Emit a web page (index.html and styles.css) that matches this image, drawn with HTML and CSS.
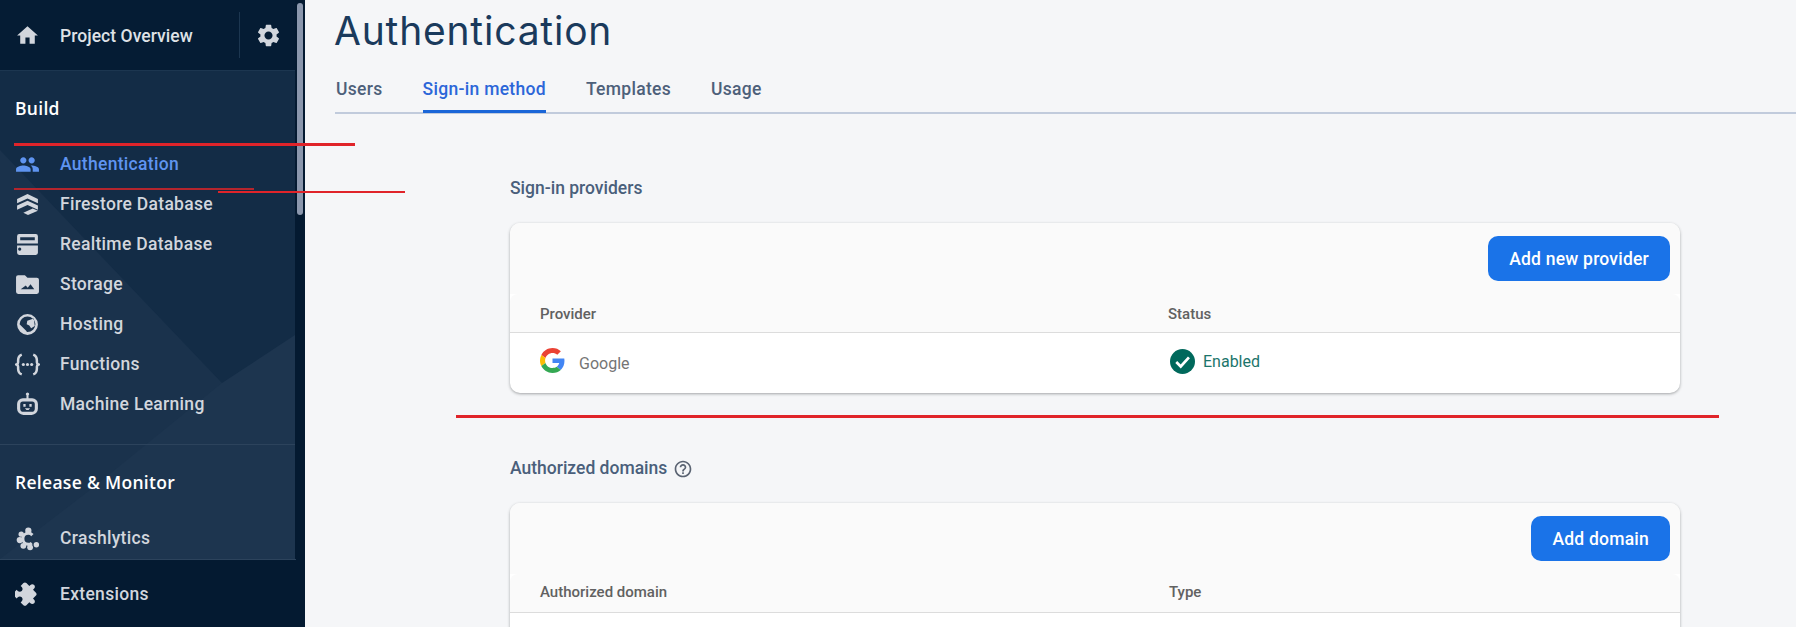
FILE: index.html
```html
<!DOCTYPE html>
<html>
  <head>
    <meta charset="UTF-8" />
    <title>Authentication</title>
    <link rel="stylesheet" href="styles.css">
  </head>
  <body>
    <div class="app">
      <aside class="sidebar">
        <div class="side-top">
          <div class="side-scroll">
            <svg class="side-decor" viewBox="0 0 295 559" preserveAspectRatio="none">
              <polygon points="0,150 260,423 295,470 295,559 0,559" fill="#1a324c" />
              <polygon points="295,335 222,383 170,425 90,490 0,559 295,559" fill="#1d354f" />
            </svg>
            <div class="project-bar">
              <svg class="icon" viewBox="0 0 24 24"><path d="M10 20v-6h4v6h5v-8h3L12 3 2 12h3v8z" /></svg>
              <span class="project-name">Project Overview</span>
              <span class="project-gear">
                <svg class="icon gear" viewBox="0 0 24 24"><path d="M19.14 12.94c.04-.3.06-.61.06-.94 0-.32-.02-.64-.07-.94l2.03-1.58c.18-.14.23-.41.12-.61l-1.92-3.32c-.12-.22-.37-.29-.59-.22l-2.39.96c-.5-.38-1.03-.7-1.62-.94l-.36-2.54c-.04-.24-.24-.41-.48-.41h-3.84c-.24 0-.43.17-.47.41l-.36 2.54c-.59.24-1.13.57-1.62.94l-2.39-.96c-.22-.08-.47 0-.59.22L2.74 8.87c-.12.21-.08.47.12.61l2.03 1.58c-.05.3-.09.63-.09.94s.02.64.07.94l-2.03 1.58c-.18.14-.23.41-.12.61l1.92 3.32c.12.22.37.29.59.22l2.39-.96c.5.38 1.03.7 1.62.94l.36 2.54c.05.24.24.41.48.41h3.84c.24 0 .44-.17.47-.41l.36-2.54c.59-.24 1.13-.56 1.62-.94l2.39.96c.22.08.47 0 .59-.22l1.92-3.32c.12-.22.07-.47-.12-.61l-2.01-1.58zM12 15.6c-1.98 0-3.6-1.62-3.6-3.6s1.62-3.6 3.6-3.6 3.6 1.62 3.6 3.6-1.62 3.6-3.6 3.6z" /></svg>
              </span>
            </div>

            <div class="nav-group">
              <div class="nav-title">Build</div>
              <a class="nav-item active">
                <svg class="icon" viewBox="0 0 24 24"><path d="M16 11c1.66 0 2.99-1.34 2.99-3S17.66 5 16 5c-1.66 0-3 1.34-3 3s1.34 3 3 3zm-8 0c1.66 0 2.99-1.34 2.99-3S9.66 5 8 5C6.34 5 5 6.34 5 8s1.34 3 3 3zm0 2c-2.33 0-7 1.17-7 3.5V19h14v-2.5c0-2.33-4.67-3.5-7-3.5zm8 0c-.29 0-.62.02-.97.05 1.16.84 1.97 1.97 1.97 3.45V19h6v-2.5c0-2.33-4.67-3.5-7-3.5z" /></svg>
                <span>Authentication</span>
              </a>
              <a class="nav-item">
                <svg class="icon" viewBox="0 0 24 24"><path d="M12 2l10 4.600v4.200L12 6.300 2 10.800V6.600z" /><path d="M12 8.400l10 4.600v4l-10-4.500L2 17v-4z" /><path d="M8 20l9-4.200 5 2.200-9.500 4z" /></svg>
                <span>Firestore Database</span>
              </a>
              <a class="nav-item">
                <svg class="icon" viewBox="0 0 24 24"><path fill-rule="evenodd" d="M4 2h16a2 2 0 0 1 2 2v7H2V4a2 2 0 0 1 2-2zm1 3v3h14V5z" /><path fill-rule="evenodd" d="M2 13h20v7a2 2 0 0 1-2 2H4a2 2 0 0 1-2-2zm4 3.500a1.500 1.500 0 1 0 0 .01z" /></svg>
                <span>Realtime Database</span>
              </a>
              <a class="nav-item">
                <svg class="icon" viewBox="0 0 24 24"><path fill-rule="evenodd" d="M3 3h6.500l2.500 2.500h9A2 2 0 0 1 23 7.500V19a2 2 0 0 1-2 2H3a2 2 0 0 1-2-2V5a2 2 0 0 1 2-2zm2.500 13.500h13l-3.600-4.800-2.700 3.300-1.900-2.100z" /></svg>
                <span>Storage</span>
              </a>
              <a class="nav-item">
                <svg class="icon" viewBox="0 0 24 24"><path fill-rule="evenodd" d="M12 2a10 10 0 1 1 0 20 10 10 0 0 1 0-20zm0 2.400a7.600 7.600 0 0 0-7.600 7.400l7 7-.4.400h1a7.600 7.600 0 0 0 7.600-7.600 7.600 7.600 0 0 0-7.600-7.200zm6 1.800l1 7.200-3.500 2.200-1.800-2.600-2.500-1.200.6-3.400z" /></svg>
                <span>Hosting</span>
              </a>
              <a class="nav-item">
                <svg class="icon" viewBox="0 0 24 24">
                  <path class="stroke-icon" d="M6.500 2.500C3.800 3.500 3 5.500 3 8v1.800c0 1-.5 1.800-1.500 2.200 1 .4 1.500 1.200 1.500 2.200V16c0 2.500.8 4.500 3.500 5.500M17.500 2.500c2.700 1 3.500 3 3.500 5.500v1.800c0 1 .5 1.800 1.500 2.200-1 .4-1.500 1.200-1.500 2.200V16c0 2.500-.8 4.500-3.500 5.500" />
                  <circle cx="8" cy="12" r="1.500" /><circle cx="12" cy="12" r="1.500" /><circle cx="16" cy="12" r="1.500" />
                </svg>
                <span>Functions</span>
              </a>
              <a class="nav-item">
                <svg class="icon" viewBox="0 0 24 24"><path fill-rule="evenodd" d="M11 3.200a1.500 1.500 0 1 1 2 0V6h3.500A5.500 5.500 0 0 1 22 11.500V16a6 6 0 0 1-6 6H8a6 6 0 0 1-6-6v-4.500A5.500 5.500 0 0 1 7.500 6H11zM7.500 9A2.500 2.500 0 0 0 5 11.500V16a3 3 0 0 0 3 3h8a3 3 0 0 0 3-3v-4.500A2.500 2.500 0 0 0 16.500 9zM8 11.500h2.200v2.600H8zm5.800 0H16v2.600h-2.200zM9.500 15.500h5L13 17.200h-2z" /></svg>
                <span>Machine Learning</span>
              </a>
            </div>

            <div class="nav-group">
              <div class="nav-title">Release &amp; Monitor</div>
              <a class="nav-item">
                <svg class="icon" viewBox="0 0 24 24">
                  <circle cx="12.800" cy="4.500" r="3" /><circle cx="6" cy="7.800" r="2.600" /><circle cx="4.600" cy="13.500" r="3" />
                  <circle cx="8" cy="19" r="2.800" /><circle cx="14.500" cy="20.500" r="2.800" /><circle cx="20.500" cy="18" r="2.600" />
                  <circle class="stroke-icon ring" cx="12.800" cy="12.300" r="5.300" />
                </svg>
                <span>Crashlytics</span>
              </a>
            </div>
          </div>
          <div class="scrollbar"><div class="scrollbar-thumb"></div></div>
        </div>
        <div class="side-footer">
          <a class="nav-item">
            <svg class="icon" viewBox="0 0 24 24"><path transform="rotate(45 12 12) translate(-.5 0)" d="M20.500 11H19V7c0-1.100-.9-2-2-2h-4V3.500C13 2.120 11.880 1 10.500 1S8 2.120 8 3.500V5H4c-1.100 0-1.990.9-1.990 2v3.800H3.500c1.490 0 2.700 1.210 2.700 2.700s-1.210 2.700-2.700 2.700H2V20c0 1.100.9 2 2 2h3.800v-1.500c0-1.490 1.210-2.700 2.700-2.700 1.490 0 2.700 1.210 2.700 2.700V22H17c1.100 0 2-.9 2-2v-4h1.500c1.380 0 2.500-1.120 2.500-2.500S21.880 11 20.500 11z" /></svg>
            <span>Extensions</span>
          </a>
        </div>
      </aside>

      <main class="main">
        <header class="page-head">
          <h1>Authentication</h1>
          <nav class="tabs">
            <a class="tab">Users</a>
            <a class="tab active">Sign-in method</a>
            <a class="tab">Templates</a>
            <a class="tab">Usage</a>
          </nav>
        </header>

        <div class="content">
          <section class="block">
            <h2>Sign-in providers</h2>
            <div class="card">
              <div class="card-bar"><button class="btn">Add new provider</button></div>
              <div class="table-row table-head">
                <span>Provider</span>
                <span>Status</span>
              </div>
              <div class="table-row table-body">
                <span class="provider">
                  <svg class="google" viewBox="0 0 48 48">
                    <path fill="#EA4335" d="M24 9.500c3.540 0 6.710 1.220 9.210 3.600l6.850-6.850C35.900 2.380 30.470 0 24 0 14.620 0 6.510 5.380 2.560 13.220l7.980 6.190C12.430 13.720 17.740 9.500 24 9.500z" />
                    <path fill="#4285F4" d="M46.980 24.550c0-1.570-.15-3.090-.38-4.550H24v9.020h12.940c-.58 2.960-2.260 5.480-4.780 7.180l7.730 6c4.510-4.180 7.090-10.360 7.090-17.650z" />
                    <path fill="#FBBC05" d="M10.530 28.590c-.48-1.450-.76-2.990-.76-4.590s.27-3.140.76-4.590l-7.980-6.190C.92 16.460 0 20.120 0 24c0 3.880.92 7.540 2.560 10.780l7.970-6.190z" />
                    <path fill="#34A853" d="M24 48c6.480 0 11.930-2.130 15.890-5.810l-7.730-6c-2.150 1.450-4.920 2.300-8.160 2.300-6.260 0-11.570-4.220-13.470-9.910l-7.980 6.190C6.510 42.620 14.620 48 24 48z" />
                  </svg>
                  Google
                </span>
                <span class="status">
                  <svg class="status-icon" viewBox="0 0 24 24">
                    <circle cx="12" cy="12" r="12" fill="#00695c" />
                    <path d="M6 12.500l4.300 4.300L18.200 8" fill="none" stroke="#fff" stroke-width="2.600" />
                  </svg>
                  Enabled
                </span>
              </div>
            </div>
          </section>

          <section class="block">
            <h2>
              Authorized domains
              <svg class="help" viewBox="0 0 24 24"><path d="M11 18h2v-2h-2v2zm1-16C6.480 2 2 6.480 2 12s4.480 10 10 10 10-4.480 10-10S17.520 2 12 2zm0 18c-4.410 0-8-3.590-8-8s3.590-8 8-8 8 3.590 8 8-3.590 8-8 8zm0-14c-2.210 0-4 1.790-4 4h2c0-1.100.9-2 2-2s2 .9 2 2c0 2-3 1.750-3 5h2c0-2.250 3-2.500 3-5 0-2.210-1.790-4-4-4z" /></svg>
            </h2>
            <div class="card">
              <div class="card-bar"><button class="btn">Add domain</button></div>
              <div class="table-row table-head table-head-tight">
                <span>Authorized domain</span>
                <span class="type-col">Type</span>
              </div>
              <div class="table-row table-body"></div>
            </div>
          </section>
        </div>
      </main>
    </div>

    <!-- red marker strokes drawn over the screenshot -->
    <div class="mark mark-a"></div>
    <div class="mark mark-b"></div>
    <div class="mark mark-c"></div>
    <div class="mark mark-d"></div>
  </body>
</html>
```

FILE: styles.css
```css
* {
  box-sizing: border-box;
}

html,
body {
  margin: 0;
  height: 100%;
  overflow: hidden;
}

body {
  font-family: Roboto, "Liberation Sans", sans-serif;
  background: #f5f6f8;
}

.app {
  display: flex;
  height: 627px;
  overflow: hidden;
}

/* sidebar */
.sidebar {
  width: 305px;
  flex: none;
  display: flex;
  flex-direction: column;
  background: #041a31;
}

.side-top {
  display: flex;
  height: 559px;
}

.side-scroll {
  position: relative;
  width: 295px;
  overflow: hidden;
  background: #132c46;
}

.side-decor {
  position: absolute;
  top: 0;
  left: 0;
  width: 295px;
  height: 559px;
}

.scrollbar {
  width: 10px;
  padding: 3px 2px 0;
}

.scrollbar-thumb {
  height: 212px;
  background: #8b97ad;
  border-radius: 3px;
}

.icon {
  width: 25px;
  height: 25px;
  flex: none;
  fill: #d2d6dd;
}

.icon.gear {
  width: 27px;
  height: 27px;
}

.stroke-icon {
  fill: none;
  stroke: #d2d6dd;
  stroke-width: 2.400;
}

.ring {
  stroke-width: 3;
  stroke-dasharray: 24 9.300;
  stroke-dashoffset: -4.600;
}

.project-bar {
  position: relative;
  display: flex;
  align-items: center;
  height: 71px;
  padding-left: 15px;
  background: #051c34;
  border-bottom: 1px solid #1c3650;
}

.project-name {
  margin: 2px 0 0 20px;
  font-size: 17.500px;
  font-weight: 500;
  letter-spacing: 0.05px;
  color: #dfe2e7;
}

.project-gear {
  display: flex;
  align-items: center;
  height: 46px;
  margin-left: auto;
  margin-right: 13px;
  padding-left: 15px;
  border-left: 1px solid #1c3650;
}

.nav-group {
  position: relative;
  padding-bottom: 20px;
  border-bottom: 1px solid #2c435c;
}

.nav-title {
  height: 26px;
  margin: 24px 0 23px 15px;
  font-family: "Open Sans", Roboto, sans-serif;
  font-size: 17.500px;
  font-weight: 600;
  line-height: 26px;
  letter-spacing: 0.3px;
  color: #fff;
}

.nav-item {
  display: flex;
  align-items: center;
  height: 40px;
  padding-left: 15px;
  font-size: 17.500px;
  font-weight: 500;
  letter-spacing: 0.3px;
  color: #d2d6dd;
}

.nav-item span {
  margin-left: 20px;
}

.nav-item.active {
  color: #5f94f0;
}

.nav-item.active .icon {
  fill: #5f94f0;
}

.side-footer {
  height: 68px;
  padding-top: 14px;
  border-top: 1px solid #2c435c;
  border-image: linear-gradient(to right, #2c435c 295px, #041a31 295px) 1;
}

/* main column */
.main {
  flex: 1;
  min-width: 0;
}

.page-head {
  padding-left: 30px;
}

h1 {
  height: 60px;
  margin: 0 0 0 -1px;
  padding-top: 1px;
  font-family: Inter, Roboto, sans-serif;
  font-size: 39px;
  font-weight: 400;
  line-height: 60px;
  letter-spacing: 0.8px;
  color: #1a3a5c;
}

.tabs {
  display: flex;
  gap: 40px;
  height: 54px;
  padding-left: 1px;
  border-bottom: 2px solid #c1cbdc;
}

.tab {
  height: 53px;
  padding-top: 17px;
  font-size: 17.500px;
  font-weight: 500;
  line-height: 24px;
  letter-spacing: 0.3px;
  color: #4d607a;
}

.tab.active {
  color: #2c66d8;
  border-bottom: 3px solid #1a66d8;
  border-radius: 3px 3px 0 0;
}

.content {
  padding: 62px 116px 0 205px;
}

.block {
  margin-bottom: 63px;
}

h2 {
  display: flex;
  align-items: center;
  height: 24px;
  margin: 0 0 23px;
  font-size: 17.500px;
  font-weight: 500;
  color: #4a5f7b;
}

.help {
  width: 20px;
  height: 20px;
  margin: 2px 0 0 6px;
  fill: #5a6372;
}

.card {
  background: #fff;
  border-radius: 10px;
  box-shadow: 0 1px 3px rgba(60, 64, 67, 0.45);
}

.card-bar {
  display: flex;
  justify-content: flex-end;
  height: 71px;
  padding: 13px 10px 0 0;
  background: #fafafa;
  border-radius: 10px 10px 0 0;
}

.btn {
  height: 45px;
  padding: 0 21px;
  font-family: inherit;
  font-size: 17.500px;
  font-weight: 500;
  letter-spacing: 0.22px;
  color: #fff;
  background: #1a73e8;
  border: 0;
  border-radius: 10px;
}

.table-row {
  display: grid;
  grid-template-columns: 628px 1fr;
  padding-left: 30px;
}

.table-head {
  height: 39px;
  padding-top: 11px;
  font-size: 15px;
  font-weight: 500;
  line-height: 18px;
  color: #616161;
  background: #fafafa;
  border-bottom: 1px solid #dcdcdc;
  border-radius: 8px 8px 0 0;
}

.table-head-tight {
  padding-top: 9px;
}

.type-col {
  margin-left: 1px;
}

.table-body {
  height: 60px;
  border-radius: 0 0 10px 10px;
}

.provider {
  display: flex;
  align-items: center;
  gap: 14px;
  font-size: 16px;
  color: #757575;
}

.google {
  width: 25px;
  height: 25px;
  margin-top: -6px;
}

.status {
  display: flex;
  align-items: center;
  gap: 8px;
  margin-left: 2px;
  padding-bottom: 3px;
  font-size: 16px;
  color: #1c756b;
}

.status-icon {
  width: 25px;
  height: 25px;
}

/* markers */
.mark {
  position: absolute;
  height: 2px;
  background: #e0242a;
}

.mark-a {
  top: 143px;
  left: 14px;
  width: 341px;
  height: 3px;
}

.mark-b {
  top: 188px;
  left: 14px;
  width: 240px;
  background: #b4252d;
}

.mark-c {
  top: 191px;
  left: 218px;
  width: 187px;
}

.mark-d {
  top: 415px;
  left: 456px;
  width: 1263px;
  height: 3px;
}
```
